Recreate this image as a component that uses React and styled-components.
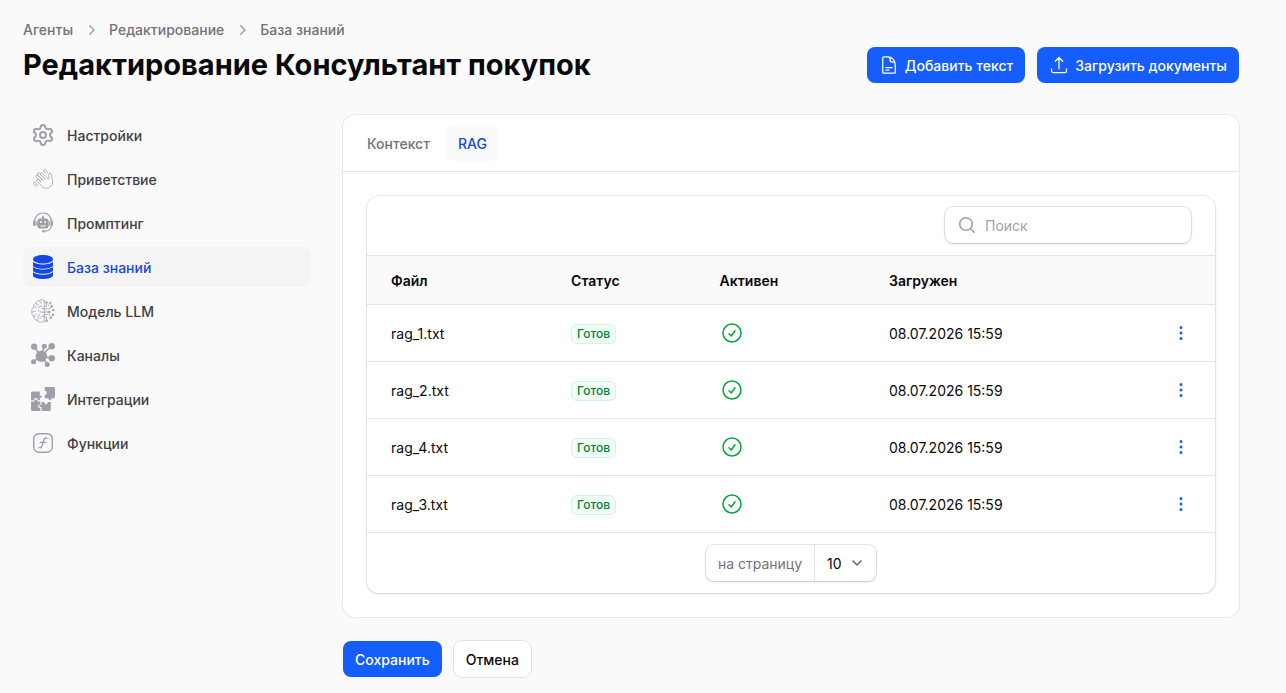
import styled, { createGlobalStyle } from "styled-components";
import { useState } from "react";
import { Settings } from "lucide-react";
import {
    HiMiniChevronRight,
    HiMiniEllipsisVertical,
    HiMiniMagnifyingGlass,
    HiOutlineArrowUpTray,
    HiOutlineCheckCircle,
    HiOutlineDocumentText,
} from "react-icons/hi2";

const GlobalStyle = createGlobalStyle`
    *, *::before, *::after {
        box-sizing: border-box;
    }
    body {
        margin: 0;
        background: #fafafa;
        color: #09090b;
        font-family: Inter, "Liberation Sans", sans-serif;
        font-size: 14px;
        line-height: 21px;
    }
    button, input, select {
        font: inherit;
        color: inherit;
    }
    svg {
        display: block;
        flex-shrink: 0;
    }
`;

const Page = styled.div`
    padding: 20px 47px 16px 23px;
`;

const Breadcrumbs = styled.nav`
    display: flex;
    align-items: center;
    gap: 8px;
    color: #9f9fa9;
    line-height: 20px;
`;

const BreadcrumbLink = styled.a`
    color: #71717b;
    font-weight: 500;
    text-decoration: none;
`;

const Header = styled.header`
    display: flex;
    justify-content: space-between;
    align-items: center;
    margin: 7px 0 32px;
`;

const Title = styled.h1`
    margin: 0;
    font-size: 29px;
    line-height: 36px;
    font-weight: 700;
`;

const ButtonGroup = styled.div`
    display: flex;
    gap: 12px;
`;

const Button = styled.button`
    display: flex;
    align-items: center;
    gap: 6px;
    height: 36px;
    padding: 0 12px;
    border: none;
    border-radius: 8px;
    background: ${(props) => (props.$primary ? "#155dfc" : "#fff")};
    color: ${(props) => (props.$primary ? "#fff" : "#09090b")};
    box-shadow: ${(props) =>
        props.$primary ? "none" : "0 0 0 1px rgba(9, 9, 11, 0.1)"};
    font-weight: 500;
    cursor: pointer;
`;

const Layout = styled.div`
    display: grid;
    grid-template-columns: 288px minmax(0, 1fr);
    gap: 32px;
    align-items: start;
`;

const SideNav = styled.nav`
    display: flex;
    flex-direction: column;
    gap: 4px;
`;

const SideLink = styled.a`
    display: flex;
    align-items: center;
    gap: 12px;
    padding: 8px;
    border-radius: 8px;
    font-weight: 500;
    text-decoration: none;
    color: ${(props) => (props.$active ? "#1447e6" : "#3f3f46")};
    background: ${(props) => (props.$active ? "#f4f4f5" : "transparent")};

    svg {
        color: ${(props) => (props.$active ? "#1447e6" : "#9f9fa9")};
    }
`;

const Main = styled.main`
    display: flex;
    flex-direction: column;
    gap: 24px;
`;

const Card = styled.section`
    border-radius: 12px;
    background: #fff;
    box-shadow: 0 0 0 1px rgba(9, 9, 11, 0.07);
`;

const TabList = styled.div`
    display: flex;
    gap: 4px;
    padding: 10px 12px;
    border-bottom: 1px solid #e4e4e7;
`;

const Tab = styled.button`
    height: 36px;
    padding: 0 12px;
    border: none;
    border-radius: 8px;
    font-weight: 500;
    cursor: pointer;
    color: ${(props) => (props.$active ? "#1447e6" : "#71717b")};
    background: ${(props) => (props.$active ? "#fafafa" : "transparent")};
`;

const CardBody = styled.div`
    padding: 24px;
`;

const TableCard = styled.div`
    border-radius: 12px;
    background: #fff;
    box-shadow: 0 0 0 1px rgba(9, 9, 11, 0.07), 0 1px 3px rgba(0, 0, 0, 0.12);
`;

const Toolbar = styled.div`
    display: flex;
    justify-content: flex-end;
    padding: 11px 24px 12px;
`;

const Field = styled.div`
    display: flex;
    align-items: center;
    height: 36px;
    border-radius: 8px;
    background: #fff;
    box-shadow: 0 0 0 1px rgba(9, 9, 11, 0.1), 0 1px 3px rgba(0, 0, 0, 0.12);
`;

const SearchLabel = styled(Field).attrs({ as: "label" })`
    width: 246px;
    gap: 8px;
    padding: 0 12px;
    color: #9f9fa9;
`;

const SearchInput = styled.input`
    flex: 1;
    min-width: 0;
    padding: 0;
    border: none;
    outline: none;
    background: none;
    color: #09090b;

    &::placeholder {
        color: #9f9fa9;
    }
`;

const Table = styled.table`
    width: 100%;
    border-collapse: separate;
    border-spacing: 0;
`;

const HeadCell = styled.th`
    height: 50px;
    padding: 0 12px;
    border: 1px solid #e4e4e7;
    border-width: 1px 0;
    background: #fafafa;
    font-weight: 600;
    text-align: left;

    &:first-child {
        padding-left: 24px;
    }
    &:last-child {
        width: 1px;
        padding-right: 24px;
    }
`;

const Cell = styled.td`
    height: 57px;
    padding: 0 12px;
    border-bottom: 1px solid #e4e4e7;
    white-space: nowrap;

    &:first-child {
        padding-left: 24px;
    }
    &:last-child {
        padding-right: 24px;
    }
`;

const Badge = styled.span`
    display: inline-block;
    padding: 1px 5px;
    border: 1px solid #d3f3de;
    border-radius: 6px;
    background: #f0fdf4;
    color: #008236;
    font-size: 12px;
    line-height: 16px;
    font-weight: 500;
    vertical-align: middle;
`;

const ActiveIcon = styled(HiOutlineCheckCircle)`
    color: #00a63e;
`;

const MenuButton = styled.button`
    display: block;
    padding: 0;
    border: none;
    background: none;
    color: #155dfc;
    cursor: pointer;
`;

const Pagination = styled.div`
    display: flex;
    justify-content: center;
    padding: 12px 24px;
`;

const PerPageLabel = styled.label`
    display: flex;
    align-items: center;
    height: 36px;
    padding: 0 12px;
    border-right: 1px solid #e4e4e7;
    color: #71717b;
`;

const SelectBox = styled.div`
    display: grid;
    grid-template-columns: 1fr 29px;
    align-items: center;

    svg {
        grid-area: 1 / 2;
        pointer-events: none;
        color: #6b7280;
    }
`;

const Select = styled.select`
    grid-area: 1 / 1 / 2 / 3;
    width: 61px;
    height: 36px;
    padding: 1px 28px 0 12px;
    border: none;
    outline: none;
    background: none;
    appearance: none;
`;

const Icon = ({ size = 24, children, ...rest }) => (
    <svg
        width={size}
        height={size}
        viewBox="0 0 24 24"
        fill="none"
        stroke="currentColor"
        strokeLinecap="round"
        strokeLinejoin="round"
        aria-hidden="true"
        {...rest}
    >
        {children}
    </svg>
);

const WaveIcon = () => (
    <Icon strokeWidth="0.8">
        <path d="M9.2 17.4 5.9 14.1a1.2 1.2 0 0 1 1.7-1.7l2.6 2.6-5-5a1.2 1.2 0 0 1 1.7-1.7l5 5-5.4-5.4a1.2 1.2 0 0 1 1.7-1.7l5.7 5.7-4.2-4.2a1.2 1.2 0 0 1 1.7-1.7l5.6 5.6c.5.5 1 .3 1-.4l-.3-3.2c-.1-1 .4-1.8 1.2-1.8.7 0 1.1.5 1.3 1.2l1.4 5.5c.6 2.4.2 4.4-1.6 6.2-2.9 2.9-6.6 2.8-9.2.2z" />
        <path d="M12.2 3.8c1.3.2 2.2 1 2.6 2.3M13 2.2c1.9.3 3.3 1.5 3.7 3.5M4.2 14.8c.1 1.5.9 2.4 2.4 2.7M2.4 15.2c.1 2.3 1.4 3.8 3.7 4.1" />
    </Icon>
);

const RobotIcon = () => (
    <Icon stroke="none" fill="currentColor">
        <path
            d="M3.5 10.5C3.8 5.200 7.400 2 12 2s8.200 3.200 8.500 8.500M20.300 14.500c0 3.500-2.300 5.600-6.800 5.800"
            fill="none"
            stroke="currentColor"
            strokeWidth="1.1"
        />
        <rect x="2" y="9.5" width="2.6" height="5.500" rx="1" />
        <rect x="19.4" y="9.5" width="2.6" height="5.500" rx="1" />
        <rect x="11" y="19.2" width="3.2" height="2.2" rx="0.8" />
        <rect x="11" y="4.7" width="2" height="4" rx="1" />
        <path
            fillRule="evenodd"
            d="M9 7.6h6a2.500 2.500 0 0 1 2.500 2.500V15a2.500 2.500 0 0 1-2.500 2.500H9A2.500 2.500 0 0 1 6.500 15v-4.900A2.500 2.500 0 0 1 9 7.600zm0 2.700v1.800h1.700v-1.800zm4.300 0v1.800H15v-1.800zM9.500 14.500v1h5v-1z"
        />
        <rect x="5.2" y="10.3" width="1.2" height="4.4" />
        <rect x="17.6" y="10.3" width="1.2" height="4.4" />
    </Icon>
);

const DatabaseIcon = () => (
    <Icon stroke="none" fill="currentColor">
        <path d="M12 0c5.5 0 10 1.8 10 4.3S17.5 8.6 12 8.6 2 6.8 2 4.3 6.5 0 12 0z" />
        <path d="M2 6.5c2 4 18 4 20 0v3.4c0 5-20 5-20 0z" />
        <path d="M2 11.6c2 4 18 4 20 0V15c0 5-20 5-20 0z" />
        <path d="M2 16.7c2 4 18 4 20 0v3.5c0 5-20 5-20 0z" />
    </Icon>
);

const BrainIcon = () => (
    <Icon strokeWidth="0.8">
        <path d="M13.3 1.5v21M13.3 1.8C12 .2 9.8.2 8.8 1.8 6.8 1.4 5.2 2.6 5.2 4.4 3 4.8 2 6.6 2.7 8.3.8 9.2.1 11.5 1.2 13.2c-.8 1.9.1 3.9 1.9 4.4-.2 2 1 3.5 3 3.5.9 1.9 3 2.6 4.7 1.6 1 .8 2 .5 2.5-.4" />
        <path d="M8.8 1.8c-.2 1.3.4 2.2 1.7 2.4M5.2 4.4c.2 1.4 1.2 2.1 2.5 1.8M2.7 8.3c1-.8 2.2-.7 3 .2M10.7 7.2c-1.6-.4-2.9.4-2.9 1.9M13.3 9.5h-2.4M1.2 13.2c.7-1.2 2.2-1.5 3.3-.7M7 11.7c1.3-.3 2.4.3 2.6 1.5h3.7M3.1 17.6c-.1-1.4.8-2.4 2.2-2.5M8.3 15.3c.2 1.6-.7 2.7-2.3 2.8M6.1 21.1c0-1.1.8-1.9 2-1.9M13.3 17.2h-1.8c-1 0-1.6.7-1.5 1.8" />
        <path d="M13.3 7.5h2.2V4.7M13.3 10h4.6l2-2M13.3 13h3.5M13.3 15.5h4.2l2.2 2M13.3 18h2.2v2.8M17.5 6.5l1.2-2" />
        <g fill="currentColor" stroke="none">
            <circle cx="15.5" cy="3.4" r="1.2" />
            <circle cx="19.3" cy="3.8" r="1.1" />
            <circle cx="20.8" cy="7.3" r="1.2" />
            <circle cx="18.2" cy="13" r="1.2" />
            <circle cx="22.4" cy="11.2" r="1.1" />
            <circle cx="22" cy="16" r="1.2" />
            <circle cx="19.8" cy="18.8" r="1.2" />
            <circle cx="15.7" cy="21.7" r="1.2" />
        </g>
    </Icon>
);

const ChannelsIcon = () => (
    <Icon strokeWidth="1.5">
        <path d="m3 3.7 7.3 9.3M13.3 3.3l-3 9.7M20.5 3 10.3 13M20.8 15.2 10.3 13M16.3 21.3l-6-8.3M2.5 18.7l7.8-5.7" />
        <g fill="currentColor" stroke="none">
            <circle cx="10.4" cy="13.2" r="5.7" />
            <circle cx="3.1" cy="3.7" r="3.1" />
            <circle cx="13.3" cy="3.3" r="2.5" />
            <circle cx="20.7" cy="3.2" r="3.2" />
            <circle cx="20.8" cy="15.2" r="3.2" />
            <circle cx="16.3" cy="21.4" r="2.5" />
            <circle cx="2.5" cy="18.8" r="2.5" />
        </g>
    </Icon>
);

const PuzzleIcon = () => (
    <Icon stroke="none" fill="currentColor">
        <path d="M1.5 4.5h7.3v4.300c.9-.6 2-.2 2 .9s-1.100 1.500-2 .9v2.600H6.700c.2-1.400-.6-2.300-1.800-2.300s-2 .9-1.800 2.300H0V6c0-.8.7-1.500 1.500-1.500z" />
        <path d="M14.500 0h8c.8 0 1.500.7 1.500 1.500v8.300c0 .8-.7 1.500-1.500 1.500h-2c.3 1-.4 1.800-1.500 1.800s-1.800-.8-1.500-1.800H13.700V7.600c1.100.4 2-.5 2-1.700s-.9-2.100-2-1.700V.8c0-.5.3-.8.8-.8z" />
        <path d="M0 14.500h3.500c-.4-1.100.3-2 1.400-2s1.800.9 1.400 2h3v3.100c-1.200-.4-2.200.4-2.200 1.600s1 2 2.200 1.600V24H1.500C.7 24 0 23.300 0 22.500z" />
        <path d="M10.500 15h2.600c0 1.400.8 2.200 1.900 2.200s1.900-.8 1.900-2.200h2.900v7.500c0 .8-.7 1.500-1.500 1.500h-7.800v-4.300c-.8.6-2.200.3-2.200-.8s1.400-1.400 2.200-.8z" />
    </Icon>
);

const FunctionIcon = () => (
    <Icon strokeWidth="1.4">
        <rect x="2.7" y="2.7" width="18.6" height="18.6" rx="5" />
        <path d="M8 16.5c1.2.8 2.3.2 2.8-1.200l2.200-6.600c.5-1.600 1.700-2.100 3-1.300M9.300 11.400h5.600" />
    </Icon>
);

const NAV_ITEMS = [
    { title: "Настройки", icon: <Settings size={24} strokeWidth={2} /> },
    { title: "Приветствие", icon: <WaveIcon /> },
    { title: "Промптинг", icon: <RobotIcon /> },
    { title: "База знаний", icon: <DatabaseIcon />, active: true },
    { title: "Модель LLM", icon: <BrainIcon /> },
    { title: "Каналы", icon: <ChannelsIcon /> },
    { title: "Интеграции", icon: <PuzzleIcon /> },
    { title: "Функции", icon: <FunctionIcon /> },
];

const TABS = ["Контекст", "RAG"];

const FILES = [
    { name: "rag_1.txt", uploaded: "08.07.2026 15:59" },
    { name: "rag_2.txt", uploaded: "08.07.2026 15:59" },
    { name: "rag_4.txt", uploaded: "08.07.2026 15:59" },
    { name: "rag_3.txt", uploaded: "08.07.2026 15:59" },
];

function FileRow({ file }) {
    return (
        <tr>
            <Cell>{file.name}</Cell>
            <Cell>
                <Badge>Готов</Badge>
            </Cell>
            <Cell>
                <ActiveIcon size={24} />
            </Cell>
            <Cell>{file.uploaded}</Cell>
            <Cell>
                <MenuButton type="button" aria-label="Действия">
                    <HiMiniEllipsisVertical size={20} />
                </MenuButton>
            </Cell>
        </tr>
    );
}

function App() {
    const [tab, setTab] = useState("RAG");
    const [search, setSearch] = useState("");
    const [perPage, setPerPage] = useState("10");

    const files = FILES.filter((file) => file.name.includes(search));

    return (
        <Page>
            <GlobalStyle />
            <Breadcrumbs>
                <BreadcrumbLink href="#">Агенты</BreadcrumbLink>
                <HiMiniChevronRight size={20} />
                <BreadcrumbLink href="#">Редактирование</BreadcrumbLink>
                <HiMiniChevronRight size={20} />
                <BreadcrumbLink href="#">База знаний</BreadcrumbLink>
            </Breadcrumbs>
            <Header>
                <Title>Редактирование Консультант покупок</Title>
                <ButtonGroup>
                    <Button type="button" $primary>
                        <HiOutlineDocumentText size={20} />
                        Добавить текст
                    </Button>
                    <Button type="button" $primary>
                        <HiOutlineArrowUpTray size={20} />
                        Загрузить документы
                    </Button>
                </ButtonGroup>
            </Header>
            <Layout>
                <SideNav>
                    {NAV_ITEMS.map((item) => (
                        <SideLink
                            key={item.title}
                            href="#"
                            $active={item.active}
                        >
                            {item.icon}
                            {item.title}
                        </SideLink>
                    ))}
                </SideNav>
                <Main>
                    <Card>
                        <TabList>
                            {TABS.map((name) => (
                                <Tab
                                    key={name}
                                    type="button"
                                    $active={name === tab}
                                    onClick={() => setTab(name)}
                                >
                                    {name}
                                </Tab>
                            ))}
                        </TabList>
                        <CardBody>
                            <TableCard>
                                <Toolbar>
                                    <SearchLabel>
                                        <HiMiniMagnifyingGlass size={20} />
                                        <SearchInput
                                            type="search"
                                            placeholder="Поиск"
                                            aria-label="Поиск"
                                            value={search}
                                            onChange={(e) =>
                                                setSearch(e.target.value)
                                            }
                                        />
                                    </SearchLabel>
                                </Toolbar>
                                <Table>
                                    <thead>
                                        <tr>
                                            <HeadCell>Файл</HeadCell>
                                            <HeadCell>Статус</HeadCell>
                                            <HeadCell>Активен</HeadCell>
                                            <HeadCell>Загружен</HeadCell>
                                            <HeadCell />
                                        </tr>
                                    </thead>
                                    <tbody>
                                        {files.map((file) => (
                                            <FileRow
                                                key={file.name}
                                                file={file}
                                            />
                                        ))}
                                    </tbody>
                                </Table>
                                <Pagination>
                                    <Field>
                                        <PerPageLabel htmlFor="per-page">
                                            на страницу
                                        </PerPageLabel>
                                        <SelectBox>
                                            <Select
                                                id="per-page"
                                                value={perPage}
                                                onChange={(e) =>
                                                    setPerPage(e.target.value)
                                                }
                                            >
                                                <option>5</option>
                                                <option>10</option>
                                                <option>25</option>
                                                <option>50</option>
                                            </Select>
                                            <Icon
                                                size={20}
                                                viewBox="0 0 20 20"
                                                strokeWidth="1.7"
                                            >
                                                <path d="m6 8 4 4 4-4" />
                                            </Icon>
                                        </SelectBox>
                                    </Field>
                                </Pagination>
                            </TableCard>
                        </CardBody>
                    </Card>
                    <ButtonGroup>
                        <Button type="submit" $primary>
                            Сохранить
                        </Button>
                        <Button type="button">Отмена</Button>
                    </ButtonGroup>
                </Main>
            </Layout>
        </Page>
    );
}

export default App;
